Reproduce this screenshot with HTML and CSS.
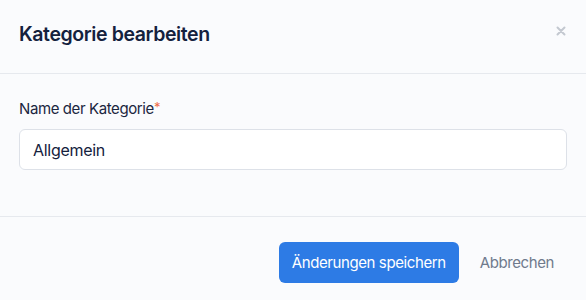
FILE: index.html
```html
<!DOCTYPE html>
<html lang="de">
<head>
  <meta charset="UTF-8" />
  <title>Kategorie bearbeiten</title>
  <link rel="stylesheet" href="styles.css">
</head>
<body>
  <div class="modal">
    <header class="modal-head">
      <h2>Kategorie bearbeiten</h2>
      <button class="close" aria-label="Schließen">
        <svg width="10" height="10" viewBox="0 0 10 10"><path d="M1.5 1.5l7 7M8.5 1.5l-7 7" stroke="#c3c8d0" stroke-width="2" stroke-linecap="round"/></svg>
      </button>
    </header>

    <div class="modal-body">
      <label for="name">Name der Kategorie<span class="req">*</span></label>
      <input type="text" id="name" value="Allgemein" />
    </div>

    <footer class="modal-foot">
      <button class="primary">Änderungen speichern</button>
      <button class="link">Abbrechen</button>
    </footer>
  </div>
</body>
</html>
```

FILE: styles.css
```css
* { margin: 0; padding: 0; box-sizing: border-box; }
body {
  background: #fafbfd;
  color: #14213d;
  font-family: 'Inter', 'Noto Sans', sans-serif;
}

.modal { width: 586px; height: 300px; }

.modal-head {
  display: flex;
  justify-content: space-between;
  align-items: center;
  height: 74px;
  padding: 0 20px 0 19px;
  border-bottom: 1px solid #e6e9ee;
}

h2 {
  font-size: 19.5px;
  font-weight: 600;
  color: #14213d;
  letter-spacing: -0.4px;
  margin-top: -5px;
}

.close {
  background: none;
  border: none;
  margin-top: -11px;
  margin-right: 0;
  cursor: pointer;
}

.modal-body {
  padding: 25px 19px 46px;
  border-bottom: 1px solid #e6e9ee;
}

label {
  display: block;
  font-size: 15px;
  color: #1b2640;
  letter-spacing: -0.4px;
  margin-bottom: 11px;
}

.req { color: #ef6c4a; font-size: 13px; vertical-align: top; }

input[type="text"] {
  width: 100%;
  height: 41px;
  padding: 0 12px 0 13px;
  border: 1px solid #dde1e8;
  border-radius: 6px;
  background: #fff;
  font-family: inherit;
  font-size: 16px;
  letter-spacing: -0.3px;
  color: #14213d;
}

.modal-foot {
  display: flex;
  justify-content: flex-end;
  align-items: center;
  gap: 21px;
  padding: 25px 32px 0 0;
}

.primary {
  height: 41px;
  padding: 0 13px;
  border: none;
  border-radius: 6px;
  background: #2d7be5;
  color: #fff;
  font-family: inherit;
  font-size: 15px;
  letter-spacing: -0.4px;
  cursor: pointer;
}

.link {
  border: none;
  background: none;
  color: #6f7a8c;
  font-family: inherit;
  font-size: 15px;
  letter-spacing: -0.4px;
  cursor: pointer;
}
```
